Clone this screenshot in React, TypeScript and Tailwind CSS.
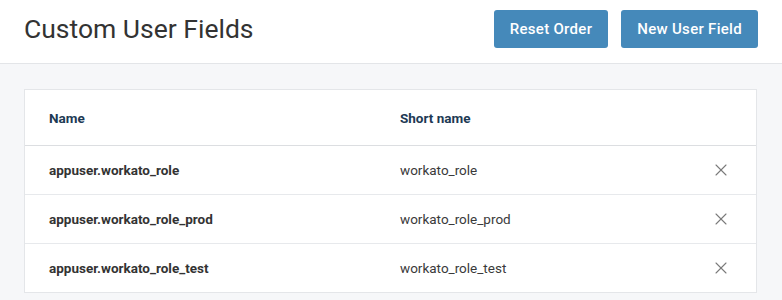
import { X } from "lucide-react";

type Field = {
  name: string;
  shortName: string;
};

const fields: Field[] = [
  { name: "appuser.workato_role", shortName: "workato_role" },
  { name: "appuser.workato_role_prod", shortName: "workato_role_prod" },
  { name: "appuser.workato_role_test", shortName: "workato_role_test" },
];

export default function App() {
  return (
    <div
      className="min-h-[300px] w-full bg-[#f6f7f9] text-[#333]"
      style={{ fontFamily: "Roboto, 'Liberation Sans', sans-serif" }}
    >
      <header className="flex h-16 items-start justify-between border-b border-[#e3e5e8] bg-white pl-6 pr-6">
        <h1 className="pt-[12px] text-[26.5px] leading-[34px] font-normal text-[#333]">
          Custom User Fields
        </h1>
        <div className="flex gap-[13px] pt-[10px]">
          <button className="h-[38px] rounded-[3px] bg-[#4589ba] px-4 text-[15px] font-medium tracking-[0.3px] text-white">
            Reset Order
          </button>
          <button className="h-[38px] rounded-[3px] bg-[#4589ba] px-4 text-[15px] font-medium tracking-[0.3px] text-white">
            New User Field
          </button>
        </div>
      </header>

      <div className="pt-[25px] pl-6 pr-[25px]">
        <div className="border border-[#e4e6e9] bg-white">
          <div className="flex h-[56px] items-center border-b border-[#dcdee1] pt-[2px] text-[13.5px] font-bold text-[#1d3a54]">
            <div className="w-[375px] pl-6">Name</div>
            <div className="flex-1">Short name</div>
          </div>
          {fields.map((f, i) => (
            <div
              key={f.name}
              className={
                i < fields.length - 1
                  ? "flex h-[49px] items-center border-b border-[#e7e9ec] text-[13.5px]"
                  : "flex h-[48px] items-center text-[13.5px]"
              }
            >
              <div className="w-[375px] pl-6 font-bold text-[#333]">{f.name}</div>
              <div className="flex-1 text-[#3a3a3a]">{f.shortName}</div>
              <button className="mr-[25px] flex h-5 w-5 items-center justify-center text-[#7a7a7a]">
                <X size={20} strokeWidth={1.3} />
              </button>
            </div>
          ))}
        </div>
      </div>
    </div>
  );
}
